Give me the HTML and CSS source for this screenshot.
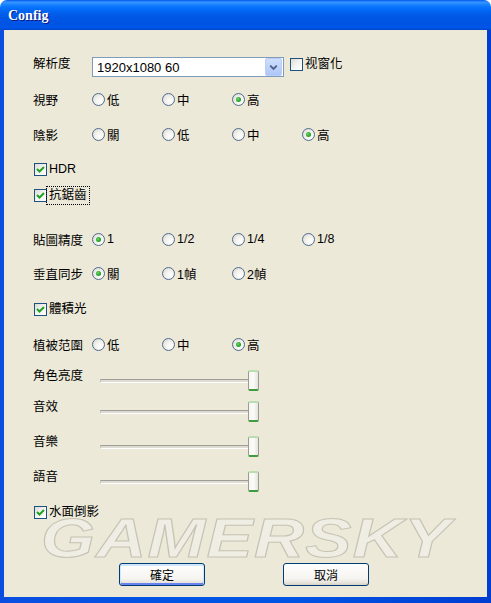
FILE: index.html
```html
<!DOCTYPE html>
<html>
<head>
<meta charset="utf-8">
<link rel="stylesheet" href="styles.css">
</head>
<body>
<div class="window">
  <div class="titlebar"><span class="title">Config</span></div>
  <div class="frame">
    <div class="client">
      <div class="watermark">GAMERSKY</div>

      <div class="row row-top r1">
        <span class="label">解析度</span>
        <div class="combo">
          <span class="combo-text">1920x1080 60</span>
          <span class="combo-btn"><svg width="15" height="17" viewBox="0 0 15 17"><path d="M4 7 L7.5 10.5 L11 7" fill="none" stroke="#4d6185" stroke-width="2"/></svg></span>
        </div>
        <span class="check combo-check"><span class="box"></span><span class="ctext">视窗化</span></span>
      </div>

      <div class="row r2">
        <span class="label">視野</span>
        <span class="opt"><span class="radio"></span>低</span>
        <span class="opt"><span class="radio"></span>中</span>
        <span class="opt"><span class="radio on"></span>高</span>
      </div>

      <div class="row r3">
        <span class="label">陰影</span>
        <span class="opt"><span class="radio"></span>關</span>
        <span class="opt"><span class="radio"></span>低</span>
        <span class="opt"><span class="radio"></span>中</span>
        <span class="opt"><span class="radio on"></span>高</span>
      </div>

      <div class="row r4">
        <span class="check"><span class="box"><svg width="11" height="11" viewBox="0 0 11 11"><path d="M2 5 L4.5 7.5 L9 3" fill="none" stroke="#21a121" stroke-width="2"/></svg></span><span class="ctext">HDR</span></span>
      </div>

      <div class="row r5">
        <span class="check"><span class="box"><svg width="11" height="11" viewBox="0 0 11 11"><path d="M2 5 L4.5 7.5 L9 3" fill="none" stroke="#21a121" stroke-width="2"/></svg></span><span class="ctext focus">抗鋸齒</span></span>
      </div>

      <div class="row r6">
        <span class="label">貼圖精度</span>
        <span class="opt"><span class="radio on"></span>1</span>
        <span class="opt"><span class="radio"></span>1/2</span>
        <span class="opt"><span class="radio"></span>1/4</span>
        <span class="opt"><span class="radio"></span>1/8</span>
      </div>

      <div class="row r7">
        <span class="label">垂直同步</span>
        <span class="opt"><span class="radio on"></span>關</span>
        <span class="opt"><span class="radio"></span>1幀</span>
        <span class="opt"><span class="radio"></span>2幀</span>
      </div>

      <div class="row r8">
        <span class="check"><span class="box"><svg width="11" height="11" viewBox="0 0 11 11"><path d="M2 5 L4.5 7.5 L9 3" fill="none" stroke="#21a121" stroke-width="2"/></svg></span><span class="ctext">體積光</span></span>
      </div>

      <div class="row r9">
        <span class="label">植被范圍</span>
        <span class="opt"><span class="radio"></span>低</span>
        <span class="opt"><span class="radio"></span>中</span>
        <span class="opt"><span class="radio on"></span>高</span>
      </div>

      <div class="srow s1">
        <span class="slabel">角色亮度</span>
        <div class="slider"><span class="track"></span><span class="thumb"></span></div>
      </div>
      <div class="srow s2">
        <span class="slabel">音效</span>
        <div class="slider"><span class="track"></span><span class="thumb"></span></div>
      </div>
      <div class="srow s3">
        <span class="slabel">音樂</span>
        <div class="slider"><span class="track"></span><span class="thumb"></span></div>
      </div>
      <div class="srow s4">
        <span class="slabel">語音</span>
        <div class="slider"><span class="track"></span><span class="thumb"></span></div>
      </div>

      <div class="row r10">
        <span class="check"><span class="box"><svg width="11" height="11" viewBox="0 0 11 11"><path d="M2 5 L4.5 7.5 L9 3" fill="none" stroke="#21a121" stroke-width="2"/></svg></span><span class="ctext">水面倒影</span></span>
      </div>

      <div class="buttons">
        <button class="btn default">確定</button>
        <button class="btn">取消</button>
      </div>
    </div>
  </div>
</div>
</body>
</html>
```

FILE: styles.css
```css
html, body {
  margin: 0;
  padding: 0;
  background: #ffffff;
}

.window {
  width: 491px;
  height: 603px;
  display: flex;
  flex-direction: column;
  font-family: "Liberation Sans", "Noto Sans CJK TC", sans-serif;
  font-size: 12.5px;
  color: #000;
}

.titlebar {
  height: 30px;
  flex: none;
  display: flex;
  align-items: flex-start;
  padding-left: 8px;
  border-radius: 7px 7px 0 0;
  background: linear-gradient(to bottom,
    #0058ee 0%, #3a93ff 7%, #288eff 11%, #127dff 18%,
    #036ffc 28%, #0262ee 40%, #0057e5 58%, #0054e3 80%,
    #0055eb 92%, #0046c8 100%);
}

.title {
  margin-top: 8px;
  line-height: 16px;
  font-family: "Liberation Serif", serif;
  font-weight: bold;
  font-size: 14px;
  color: #ffffff;
  text-shadow: 1px 1px 0 #0a1883;
}

.frame {
  flex: 1;
  display: flex;
  padding: 0 4px 6px 4px;
  background: linear-gradient(to right, #0a4ee0 0%, #0055e5 40%, #0055e5 60%, #003dd1 100%);
}

.client {
  flex: 1;
  position: relative;
  z-index: 0;
  background: #ece9d8;
  display: flex;
  flex-direction: column;
  padding: 27px 0 0 29px;
}

.watermark {
  position: absolute;
  z-index: -1;
  left: 37px;
  top: 488px;
  font-family: "Liberation Sans", sans-serif;
  font-weight: bold;
  font-style: italic;
  font-size: 55px;
  line-height: 40px;
  letter-spacing: 1px;
  color: #efede4;
  -webkit-text-stroke: 1px #c7c3b3;
  transform: scaleX(1.26);
  transform-origin: left top;
  white-space: nowrap;
}

.row {
  display: flex;
  align-items: center;
  height: 22px;
}

.row-top {
  align-items: flex-start;
  height: 20px;
}

.r2 { margin-top: 11px; }
.r3 { margin-top: 13px; }
.r4 { margin-top: 13px; }
.r5 { margin-top: 4px; }
.r6 { margin-top: 22px; }
.r7 { margin-top: 12px; }
.r8 { margin-top: 14px; }
.r9 { margin-top: 13px; }
.r10 { margin-top: 9px; }

.label {
  width: 59px;
  flex: none;
}

.row-top .label {
  line-height: 14px;
  margin-top: 0;
}

.opt {
  width: 70px;
  flex: none;
  display: flex;
  align-items: center;
  gap: 2px;
}

.radio {
  width: 11px;
  height: 11px;
  border-radius: 50%;
  border: 1px solid #4f6c90;
  background: radial-gradient(circle at 65% 65%, #ffffff 0%, #f4f3ee 40%, #d5d3cb 100%);
  display: flex;
  align-items: center;
  justify-content: center;
  flex: none;
}

.radio.on::after {
  content: "";
  width: 5px;
  height: 5px;
  border-radius: 50%;
  background: radial-gradient(circle at 40% 40%, #6fd66f 0%, #21a121 60%, #1a8a1a 100%);
}

.check {
  display: flex;
  align-items: center;
  gap: 2px;
  margin-left: 1px;
}

.ctext {
  line-height: 13px;
}

.box {
  width: 11px;
  height: 11px;
  border: 1px solid #1c5180;
  background: linear-gradient(135deg, #dcdbd3 0%, #f2f2ee 45%, #ffffff 100%);
  display: flex;
  align-items: center;
  justify-content: center;
  flex: none;
}

.focus {
  outline: 1px dotted #000;
  outline-offset: 2px;
}

.combo {
  width: 185px;
  height: 18px;
  border: 1px solid #7f9db9;
  background: #ffffff;
  display: flex;
  align-items: center;
  justify-content: space-between;
  padding: 0 1px 0 4px;
  flex: none;
}

.combo-text {
  font-size: 13px;
}

.combo-btn {
  width: 15px;
  height: 16px;
  border: 1px solid #b9cdf6;
  border-radius: 2px;
  background: linear-gradient(to bottom, #cfdefc 0%, #bcd0fa 60%, #aec6f7 100%);
  display: flex;
  align-items: center;
  justify-content: center;
}

.combo-btn svg {
  width: 15px;
  height: 16px;
}

.combo-check {
  margin-left: 6px;
  margin-top: 1px;
}

.srow {
  display: flex;
  align-items: flex-start;
  height: 22px;
}

.s1 { margin-top: 14px; }
.s2 { margin-top: 9px; }
.s3 { margin-top: 13px; }
.s4 { margin-top: 13px; }

.slabel {
  width: 67px;
  flex: none;
  line-height: 14px;
  margin-top: 0;
}

.slider {
  width: 159px;
  height: 21px;
  display: flex;
  align-items: center;
  margin-top: 1px;
}

.track {
  flex: 1;
  height: 2px;
  border-top: 1px solid #9d9d96;
  border-bottom: 1px solid #ffffff;
  background: #dedcd2;
  border-left: 1px solid #c6c4bb;
}

.thumb {
  width: 9px;
  height: 17px;
  margin-left: -2px;
  border: 1px solid #9a9b94;
  border-top: 2px solid #b9dfb0;
  border-bottom: 2px solid #3e9c3e;
  border-radius: 2px;
  background: linear-gradient(to right, #f6f6f2 0%, #fbfbf9 50%, #e4e3dc 100%);
}

.buttons {
  display: flex;
  gap: 78px;
  margin-top: 40px;
  padding-left: 86px;
}

.btn {
  width: 86px;
  height: 23px;
  border: 1px solid #003c74;
  border-radius: 3px;
  background: linear-gradient(to bottom, #ffffff 0%, #f5f4f0 70%, #e6e3da 90%, #d6d0c5 100%);
  font-family: "Noto Sans CJK TC", sans-serif;
  font-size: 12px;
  color: #000;
  padding: 0;
  line-height: 21px;
}

.btn.default {
  box-shadow: inset 0 1px 0 1px #cee7ff, inset 0 -1px 0 1px #6982ee;
}
```
